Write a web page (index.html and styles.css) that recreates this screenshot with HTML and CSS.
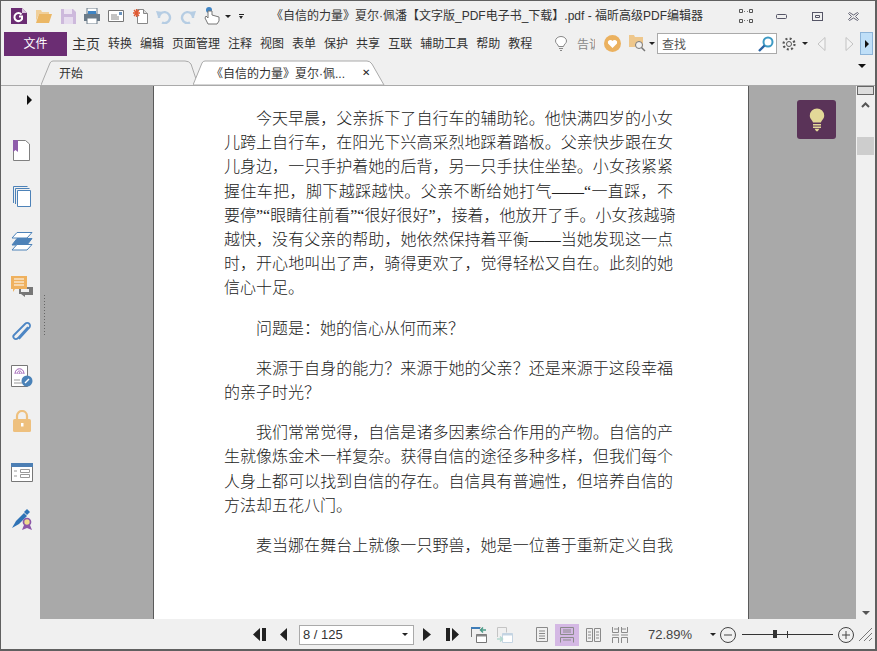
FILE: index.html
```html
<!DOCTYPE html>
<html lang="zh">
<head>
<meta charset="utf-8">
<title>福昕高级PDF编辑器</title>
<link rel="stylesheet" href="styles.css">
</head>
<body>
<div class="window">
  <header class="titlebar">
    <div class="quick">
      <span class="slot first"><svg width="16" height="16" viewBox="0 0 16 16"><path d="M0 0h11l5 5v11H0z" fill="#6b2d73"/><path d="M11 0l5 5h-5z" fill="#d9c3df"/><path d="M10.500 6.500A4 4 0 1 0 11 11V8.500H8" fill="none" stroke="#fff" stroke-width="2"/></svg></span>
      <span class="slot"><svg width="16" height="14" viewBox="0 0 16 14"><path d="M0 1h5l1 2h7v2H3L0 12z" fill="#f0cf9a"/><path d="M3 5h13l-3 9H0z" fill="#ebb765"/></svg></span>
      <span class="slot"><svg width="15" height="15" viewBox="0 0 15 15"><path d="M0 0h12l3 3v12H0z" fill="#cdb9dc"/><path d="M3 0h8v5H3z" fill="#ece4f1"/><path d="M3 8h9v7H3z" fill="#e6dcee"/></svg></span>
      <span class="slot"><svg width="16" height="16" viewBox="0 0 16 16"><path d="M3 0h10v6H3z" fill="#fff" stroke="#6a7a88"/><path d="M4 3h8v3H4z" fill="#3f84c4"/><path d="M0 6h16v7H0z" fill="#6a7a88"/><path d="M3 10h10v6H3z" fill="#fff" stroke="#6a7a88"/></svg></span>
      <span class="slot"><svg width="16" height="12" viewBox="0 0 16 12"><path d="M.5.5h15v11H.5z" fill="#fff" stroke="#777"/><path d="M3 5h6M3 7h8M3 9h8" stroke="#888"/><path d="M11 2h3v3h-3z" fill="#6a93bd"/></svg></span>
      <span class="slot"><svg width="15" height="16" viewBox="0 0 15 16"><path d="M4.500 1.500h6l4 4v10h-10z" fill="#fff" stroke="#888"/><path d="M10.500 1.500v4h4" fill="#ddd" stroke="#888"/><path d="M3.500 1v8M0 5h7M1 2l5 6M6 2L1 8" stroke="#e05a32" stroke-width="1.300"/></svg></span>
      <span class="slot"><svg width="16" height="15" viewBox="0 0 16 15"><path d="M3 9a5.500 5.500 0 1 1 3 4.500" fill="none" stroke="#b6cde3" stroke-width="2.400"/><path d="M0 2l7 1-5 5z" fill="#b6cde3"/></svg></span>
      <span class="slot"><svg width="16" height="15" viewBox="0 0 16 15"><path d="M13 9a5.500 5.500 0 1 0-3 4.500" fill="none" stroke="#b6cde3" stroke-width="2.400"/><path d="M16 2L9 3l5 5z" fill="#b6cde3"/></svg></span>
      <span class="slot"><svg width="16" height="18" viewBox="0 0 16 18"><circle cx="5" cy="3" r="3" fill="#3f84c4"/><path d="M4 4v7L2 9 1 11l3 6h9l2-3v-4l-7-2V4z" fill="#fff" stroke="#777"/></svg></span>
      <span class="tri tri-menu"></span>
      <span class="more"></span>
    </div>
    <div class="doc-title">《自信的力量》夏尔·佩潘【文字版_PDF电子书_下载】.pdf - 福昕高级PDF编辑器</div>
    <div class="winbtns">
      <svg width="14" height="14" viewBox="0 0 14 14" fill="none" stroke="#555"><path d="M.5.5h3v3h-3zM10.500.5h3v3h-3zM.5 10.500h3v3h-3zM10.500 10.500h3v3h-3z"/><path d="M5 3l1-1M9 3L8 2M5 11l1 1M9 11l-1 1" stroke="#777"/></svg>
      <svg class="wb-min" width="11" height="5" viewBox="0 0 11 5" fill="none" stroke="#556"><rect x=".5" y=".5" width="10" height="4" rx="1"/></svg>
      <svg class="wb-max" width="11" height="9" viewBox="0 0 11 9" fill="none" stroke="#556"><rect x=".5" y=".5" width="10" height="8"/><path d="M3.500 3.500h4v2h-4z"/></svg>
      <svg class="wb-close" width="11" height="9" viewBox="0 0 11 9" fill="#e8e8e8" stroke="#667"><path d="M.5 1.500l1-1L5.500 3l4-2.500 1 1L7.500 4.500l3 3-1 1L5.500 6l-4 2.500-1-1 3-3z"/></svg>
    </div>
  </header>

  <nav class="ribbon">
    <div class="file-btn">文件</div>
    <div class="menu">
      <span class="menu-item big">主页</span><span class="menu-item">转换</span><span class="menu-item">编辑</span><span class="menu-item">页面管理</span><span class="menu-item">注释</span><span class="menu-item">视图</span><span class="menu-item">表单</span><span class="menu-item">保护</span><span class="menu-item">共享</span><span class="menu-item">互联</span><span class="menu-item">辅助工具</span><span class="menu-item">帮助</span><span class="menu-item">教程</span>
    </div>
    <svg class="r-bulb" width="12" height="15" viewBox="0 0 12 15" fill="none" stroke="#888"><path d="M3.500 10.500C3 8 .5 7.500.5 5a5.500 4.500 0 0 1 11 0c0 2.500-2.500 3-3 5.500z" fill="#fff"/><path d="M4 12.500h4M5 14.500h2"/></svg>
    <span class="tell">告诉</span>
    <svg class="r-heart" width="17" height="17" viewBox="0 0 17 17"><circle cx="8.500" cy="8.500" r="8.500" fill="#ebb15f"/><path d="M8.500 13L4 8.500A2.600 2.600 0 0 1 8.500 6a2.600 2.600 0 0 1 4.500 2.500z" fill="#fff"/></svg>
    <svg class="r-folder" width="17" height="17" viewBox="0 0 17 17"><path d="M0 0h5l1 2h8v10H0z" fill="#eec78c"/><circle cx="10" cy="10" r="3.500" fill="#f0f0f0" stroke="#777"/><path d="M12.500 12.500L16 16" stroke="#777" stroke-width="1.500"/></svg>
    <span class="tri tri-f"></span>
    <div class="search"><span class="search-text">查找</span>
      <svg width="16" height="16" viewBox="0 0 16 16" fill="none"><circle cx="10" cy="6" r="4.500" stroke="#3d9ac4" stroke-width="2"/><path d="M6.500 9.500L1 15" stroke="#2a64a4" stroke-width="2.400"/></svg>
    </div>
    <svg class="r-gear" width="14" height="14" viewBox="0 0 14 14" fill="none" stroke="#555"><circle cx="7" cy="7" r="2.500"/><circle cx="7" cy="7" r="5.500" stroke-width="2.200" stroke-dasharray="2 2.320"/></svg>
    <span class="tri tri-g"></span>
    <svg class="r-prev" width="9" height="14" viewBox="0 0 9 14"><path d="M8 .5L1 7l7 6.500z" fill="#f4f4f4" stroke="#c2c2c2"/></svg>
    <svg class="r-next" width="9" height="14" viewBox="0 0 9 14"><path d="M1 .5L8 7l-7 6.500z" fill="#f4f4f4" stroke="#c2c2c2"/></svg>
    <div class="expand"><span class="tri-r"></span></div>
  </nav>

  <div class="tabbar">
    <div class="tab tab-home">
      <svg class="tab-shape" width="158" height="25" viewBox="0 0 158 25"><path d="M0 25L9 3q1-2 3-2h132q4 0 6 3l7 21" fill="#f0f0f0" stroke="#aaa"/></svg>
      <span class="tab-label">开始</span>
    </div>
    <div class="tab tab-doc">
      <svg class="tab-shape" width="192" height="25" viewBox="0 0 192 25"><path d="M0 25L9 3q1-2 3-2h162q3 0 5 3l12 21z" fill="#fff" stroke="#aaa"/></svg>
      <span class="tab-label">《自信的力量》夏尔·佩...</span>
      <span class="tab-x">✕</span>
    </div>
    <span class="tab-menu"></span>
  </div>

  <main class="workspace">
    <aside class="sidebar">
      <span class="side-arrow"></span>
      <svg class="si si-1" width="18" height="21" viewBox="0 0 18 21"><path d="M.5 5.500v15h16V4l-4-3.500H.5z" fill="#fff" stroke="#808080"/><path d="M0 0h5v12L2.500 10 0 12z" fill="#8f5dab"/></svg>
      <svg class="si" width="18" height="21" viewBox="0 0 18 21" fill="#fff" stroke="#4d82b8"><path d="M.5 17V.5h14M2.500 18V2.500h14" fill="none"/><path d="M4.500 4.500h13v16h-13z"/></svg>
      <svg class="si si-3" width="22" height="19" viewBox="0 0 22 19" stroke="#4d82b8" fill="#fff"><path d="M6 .5h15L16 6H1z"/><path d="M6 6.500h15L16 13H1z" fill="#4d82b8"/><path d="M6 12.500h15L16 18H1z"/></svg>
      <svg class="si si-4" width="22" height="21" viewBox="0 0 22 21"><path d="M8 11h14v8H14v2l-4-3H8z" fill="#777"/><path d="M10 13h8v3h-8z" fill="#f0f0f0"/><path d="M0 0h16v13H4l-2 3v-3H0z" fill="#efb15e"/><path d="M3 3h10M3 6h10M3 9h10" stroke="#fff"/></svg>
      <svg class="si si-5" width="20" height="22" viewBox="0 0 20 22" fill="none" stroke="#4d86c4" stroke-width="1.800"><path d="M16 6L6 17c-3 3-6-1-4-3L13 3c3-3 7 1 4 4L7 18"/></svg>
      <svg class="si si-6" width="22" height="22" viewBox="0 0 22 22"><path d="M.5.500h16v21H.5z" fill="#fff" stroke="#777"/><path d="M4 9c0-7 9-7 9 0M6 9c0-4 5-4 5 0M8 9c0-2 1-2 1 0" fill="none" stroke="#9d5db4"/><path d="M3 15h6M3 18h8" stroke="#999"/><circle cx="16" cy="16" r="5.500" fill="#4a82b8"/><path d="M14 18l4-4" stroke="#fff" stroke-width="1.500"/></svg>
      <svg class="si si-7" width="18" height="22" viewBox="0 0 18 22"><path d="M4 9V6a5 5 0 0 1 10 0v3" fill="none" stroke="#eec07e" stroke-width="2.200"/><rect y="9" width="18" height="13" rx="1.500" fill="#eec07e"/><path d="M8 13h2.500v3.500H8z" fill="#fff"/></svg>
      <svg class="si si-8" width="22" height="19" viewBox="0 0 22 19"><path d="M.5.500h21v18H.5z" fill="#fff" stroke="#777"/><path d="M0 0h22v4H0z" fill="#4d7fb4"/><path d="M3 8h3M3 13h3" stroke="#999"/><path d="M9.500 6.500h9v3h-9zM9.500 11.500h9v3h-9z" fill="none" stroke="#999"/></svg>
      <svg class="si si-9" width="21" height="21" viewBox="0 0 21 21"><path d="M0 19l4-7 8-8 3 3-8 8z" fill="#2f73b6"/><path d="M12 3l3-3 3 3-3 3z" fill="#2f73b6"/><circle cx="15" cy="13" r="3.500" fill="#f0dc8c" stroke="#8d57a8" stroke-width="1.700"/><path d="M12 16l-2 5 5-2 5 2-2-5" fill="#8d57a8"/></svg>
    </aside>

    <section class="canvas">
      <div class="grip"></div>
      <article class="page">
        <p><span class="ln ind">今天早晨，父亲拆下了自行车的辅助轮。他快满四岁的小女</span><span class="ln">儿跨上自行车，在阳光下兴高采烈地踩着踏板。父亲快步跟在女</span><span class="ln">儿身边，一只手护着她的后背，另一只手扶住坐垫。小女孩紧紧</span><span class="ln">握住车把，脚下越踩越快。父亲不断给她打气——“一直踩，不</span><span class="ln">要停”“眼睛往前看”“很好很好”，接着，他放开了手。小女孩越骑</span><span class="ln">越快，没有父亲的帮助，她依然保持着平衡——当她发现这一点</span><span class="ln">时，开心地叫出了声，骑得更欢了，觉得轻松又自在。此刻的她</span><span class="ln end">信心十足。</span></p>
        <p><span class="ln ind end">问题是：她的信心从何而来？</span></p>
        <p><span class="ln ind">来源于自身的能力？来源于她的父亲？还是来源于这段幸福</span><span class="ln end">的亲子时光？</span></p>
        <p><span class="ln ind">我们常常觉得，自信是诸多因素综合作用的产物。自信的产</span><span class="ln">生就像炼金术一样复杂。获得自信的途径多种多样，但我们每个</span><span class="ln">人身上都可以找到自信的存在。自信具有普遍性，但培养自信的</span><span class="ln end">方法却五花八门。</span></p>
        <p><span class="ln ind">麦当娜在舞台上就像一只野兽，她是一位善于重新定义自我</span></p>
      </article>
      <button class="tip" type="button" aria-label="提示">
        <svg width="16" height="24" viewBox="0 0 20 30"><path d="M5 18C4 15 1 14 1 9.500a9 9 0 0 1 18 0c0 4.500-3 5.500-4 8.500z" fill="#e3d898"/><path d="M5 20h10v2H5zM5 23h10v2H5z" fill="#e3d898"/><path d="M7 26h6l-2 3H9z" fill="#e3d898"/></svg>
      </button>
    </section>

    <div class="scrollbar">
      <div class="split-box"></div>
      <svg class="sb-up" width="9" height="6" viewBox="0 0 9 6" fill="none" stroke="#555" stroke-width="2"><path d="M1 5l3.500-3.500L8 5"/></svg>
      <div class="thumb"></div>
      <span class="sb-down"></span>
    </div>
  </main>

  <footer class="statusbar">
    <svg class="st st-first" width="13" height="13" viewBox="0 0 13 13" fill="#222"><path d="M7 0v13L0 6.500zM9 0h4v13H9z"/></svg>
    <svg class="st st-prev" width="7" height="13" viewBox="0 0 7 13" fill="#222"><path d="M7 0v13L0 6.500z"/></svg>
    <div class="pagebox"><span>8 / 125</span><span class="tri"></span></div>
    <svg class="st st-next" width="8" height="13" viewBox="0 0 8 13" fill="#222"><path d="M0 0v13l8-6.500z"/></svg>
    <svg class="st st-last" width="13" height="13" viewBox="0 0 13 13" fill="#222"><path d="M6 0v13l7-6.500zM0 0h4v13H0z"/></svg>
    <svg class="st st-v1" width="16" height="16" viewBox="0 0 16 16" fill="none"><path d="M.5 10V.5h9" stroke="#777"/><path d="M0 0h9v2H0z" fill="#3f7db8"/><path d="M5.500 7.500h10v8h-10z" stroke="#777" fill="#fff"/><path d="M5.500 7.500h10v2h-10z" fill="#888"/><path d="M15 3H9M12 .5L9.500 3 12 5.500" stroke="#4b9a88" stroke-width="1.500"/></svg>
    <svg class="st st-v2" width="16" height="16" viewBox="0 0 16 16" fill="none"><path d="M.5 10V.5h9v5" stroke="#c4c4c4"/><path d="M5.500 6.500h10v9h-10z" stroke="#c4d4e2" fill="#fff"/><path d="M5.500 6.500h10v2h-10z" fill="#c4d4e2"/><path d="M0 12h5M3 9.500L5.500 12 3 14.500" stroke="#b4d8d0" stroke-width="1.500"/></svg>
    <svg class="st st-p1" width="12" height="15" viewBox="0 0 12 15" fill="none" stroke="#8a8a8a"><path d="M.5.500h11v14H.5z"/><path d="M3 4h6M3 6.500h6M3 9h6M3 11.500h6"/></svg>
    <div class="st st-p2"><svg width="14" height="16" viewBox="0 0 14 16" fill="none" stroke="#8a8a8a"><path d="M.5.500h13v7H.5z"/><path d="M3 3h8M3 5h8M.5 15.500v-5h13v5M3 13h8"/></svg></div>
    <svg class="st st-p3" width="15" height="14" viewBox="0 0 15 14" fill="none" stroke="#8a8a8a"><path d="M.5.500h6v13h-6zM8.500.500h6v13h-6z"/><path d="M2 4h3M2 7h3M2 10h3M10 4h3M10 7h3M10 10h3"/></svg>
    <svg class="st st-p4" width="16" height="16" viewBox="0 0 16 16" fill="none" stroke="#8a8a8a"><path d="M.5 0v5.500h6V0M9.500 0v5.500h6V0M0 8h7M9 8h7M.5 16v-5.500h6V16M9.500 16v-5.500h6V16M7 2H2M14 2H10"/></svg>
    <span class="zoom-val">72.89%</span>
    <span class="tri tri-z"></span>
    <svg class="st st-minus" width="16" height="16" viewBox="0 0 16 16" fill="none" stroke="#444"><circle cx="8" cy="8" r="7.500"/><path d="M4 8h8"/></svg>
    <div class="slider"><span class="knob"></span><span class="mid"></span></div>
    <svg class="st st-plus" width="16" height="16" viewBox="0 0 16 16" fill="none" stroke="#444"><circle cx="8" cy="8" r="7.500"/><path d="M4 8h8M8 4v8"/></svg>
    <svg class="st st-grip" width="13" height="13" viewBox="0 0 13 13" fill="none" stroke="#777"><path d="M0 13L13 0M5 13l8-8M10 13l3-3"/></svg>
  </footer>
</div>
</body>
</html>
```

FILE: styles.css
```css
* { box-sizing: border-box; }
html, body { margin: 0; padding: 0; }
body { width: 877px; height: 651px; overflow: hidden; font-family: "Liberation Sans", "Noto Sans CJK SC", sans-serif; color: #333; }
svg { display: block; flex: none; }

.window { width: 877px; height: 651px; display: flex; flex-direction: column; background: #f0f0f0; border: solid #606060; border-width: 1px 2px 2px 1px; }

.titlebar { height: 30px; display: flex; align-items: center; flex: none; }
.quick { display: flex; align-items: center; width: 270px; flex: none; }
.slot { width: 24px; display: flex; justify-content: center; flex: none; }
.slot.first { width: 25px; margin-left: 5px; margin-right: 1px; }
.tri { display: block; width: 0; height: 0; border: solid transparent; border-width: 3px 3px 0; border-top-color: #222; flex: none; }
.tri-menu { margin-left: 1px; }
.more { width: 5px; height: 5px; margin-left: 8px; border-top: 1px solid #222; position: relative; }
.more::after { content: ""; position: absolute; left: 0; top: 1px; border: solid transparent; border-width: 3px 2.500px 0; border-top-color: #222; }
.doc-title { font-size: 12px; line-height: 18px; color: #333; white-space: nowrap; width: 468px; flex: none; }
.winbtns { display: flex; align-items: center; }
.wb-min { margin-left: 23px; margin-top: 1px; }
.wb-max { margin-left: 25px; }
.wb-close { margin-left: 25px; }

.ribbon { height: 25px; display: flex; align-items: center; flex: none; margin-left: 3px; }
.file-btn { width: 63px; height: 24px; background: #6b2d73; color: #fff; font-size: 12px; line-height: 24px; text-align: center; flex: none; }
.menu { display: flex; gap: 8px; margin-left: 5px; width: 483px; flex: none; }
.menu-item { font-size: 12px; line-height: 18px; white-space: nowrap; color: #333; }
.menu-item.big { font-size: 14px; }
.tell { font-size: 12px; color: #888; width: 18px; overflow: hidden; white-space: nowrap; margin-left: 10px; flex: none; }
.r-heart { margin-left: 9px; }
.r-folder { margin-left: 8px; }
.tri-f { margin-left: 3px; }
.search { width: 120px; height: 21px; margin-left: 2px; background: #fff; border: 1px solid #aaa; display: flex; align-items: center; justify-content: space-between; padding: 0 2px 0 4px; flex: none; }
.search-text { font-size: 12px; color: #555; }
.r-gear { margin-left: 5px; }
.tri-g { margin-left: 6px; }
.r-prev { margin-left: 9px; }
.r-next { margin-left: 19px; }
.expand { width: 13px; height: 23px; margin-left: 6px; background: #bfdff8; border: 1px solid #8db4d8; display: flex; align-items: center; justify-content: center; flex: none; }
.tri-r { border: solid transparent; border-width: 4px 0 4px 4px; border-left-color: #111; }

.tabbar { height: 30px; display: flex; align-items: flex-end; position: relative; flex: none; border-bottom: 1px solid #aaa; padding-left: 40px; }
.tab { position: relative; height: 25px; flex: none; font-size: 12px; display: flex; align-items: center; white-space: nowrap; }
.tab-shape { position: absolute; left: 0; top: 0; }
.tab-label, .tab-x { position: relative; }
.tab-home { width: 152px; padding-left: 18px; }
.tab-doc { width: 192px; padding-left: 18px; }
.tab-x { font-size: 10px; margin-left: 17px; color: #222; font-family: "DejaVu Sans", sans-serif; font-weight: 700; }
.tab-menu { position: absolute; right: 9px; top: 8px; border: solid transparent; border-width: 4px 4px 0; border-top-color: #111; }

.workspace { flex: 1; display: flex; min-height: 0; }
.sidebar { width: 39px; flex: none; display: flex; flex-direction: column; align-items: center; background: #f0f0f0; position: relative; padding-left: 3px; }
.side-arrow { position: absolute; left: 26px; top: 9px; border: solid transparent; border-width: 5px 0 5px 5px; border-left-color: #111; }
.si { margin-top: 25px; }
.si-1 { margin-top: 54px; }
.si-3 { margin-top: 25px; }
.si-4 { margin-top: 25px; }
.si-5 { margin-top: 24px; }
.si-6 { margin-top: 22px; }
.si-7 { margin-top: 23px; }
.si-8 { margin-top: 31px; }
.si-9 { margin-top: 27px; }

.canvas { flex: 1; background: #a9a9a9; position: relative; display: flex; min-width: 0; overflow: hidden; }
.grip { position: absolute; left: 3px; top: 208px; width: 4px; height: 42px; background-image: radial-gradient(circle, #666 0.7px, transparent 0.8px); background-size: 3px 3px; }
.page { width: 596px; flex: none; margin-left: 113px; background: #fff; border: solid #5a5a5a; border-width: 0 1px; padding: 21px 75px 0 70px; font-family: "Liberation Serif", "Noto Sans CJK SC", serif; font-size: 16px; line-height: 24.200px; color: #222; font-weight: 300; }
.page p { margin: 0 0 16px; }
.ln { display: block; white-space: nowrap; text-align: justify; text-align-last: justify; }
.ln.ind { padding-left: 32px; }
.ln.end { text-align: left; text-align-last: left; }
.tip { position: absolute; right: 20px; top: 14px; width: 39px; height: 39px; border: 0; border-radius: 3px; background: #5a3358; padding: 0; display: flex; align-items: center; justify-content: center; }

.scrollbar { width: 19px; flex: none; background: #f0f0f0; display: flex; flex-direction: column; align-items: center; position: relative; }
.split-box { width: 17px; height: 9px; background: #ddd; border: 1px solid #666; flex: none; }
.sb-up { margin-top: 7px; }
.thumb { width: 17px; height: 18px; background: #cdcdcd; margin-top: 29px; flex: none; }
.sb-down { position: absolute; bottom: 4px; left: 6px; border: solid transparent; border-width: 4px 4px 0; border-top-color: #555; }

.statusbar { height: 30px; flex: none; display: flex; align-items: center; background: #f0f0f0; padding: 1px 0 0 252px; }
.st-prev { margin-left: 14px; }
.pagebox { width: 115px; height: 20px; margin-left: 12px; border: 1px solid #aaa; background: #fff; font-size: 13px; line-height: 18px; padding: 0 5px 0 3px; display: flex; align-items: center; justify-content: space-between; flex: none; color: #333; }
.st-next { margin-left: 9px; }
.st-last { margin-left: 15px; }
.st-v1 { margin-left: 12px; }
.st-v2 { margin-left: 10px; }
.st-p1 { margin-left: 23px; }
.st-p2 { width: 24px; height: 22px; margin-left: 7px; background: #d4b8e4; display: flex; align-items: center; justify-content: center; flex: none; }
.st-p3 { margin-left: 7px; }
.st-p4 { margin-left: 11px; }
.zoom-val { font-size: 13px; margin-left: 20px; width: 43px; color: #444; white-space: nowrap; flex: none; }
.tri-z { margin-left: 19px; }
.st-minus { margin-left: 4px; }
.slider { width: 91px; height: 1px; margin-left: 6px; background: #333; position: relative; flex: none; }
.knob { position: absolute; left: 31px; top: -4px; width: 4px; height: 8px; background: #333; }
.mid { position: absolute; left: 45px; top: -3px; width: 1px; height: 7px; background: #333; }
.st-plus { margin-left: 5px; }
.st-grip { margin-left: 5px; }
```
